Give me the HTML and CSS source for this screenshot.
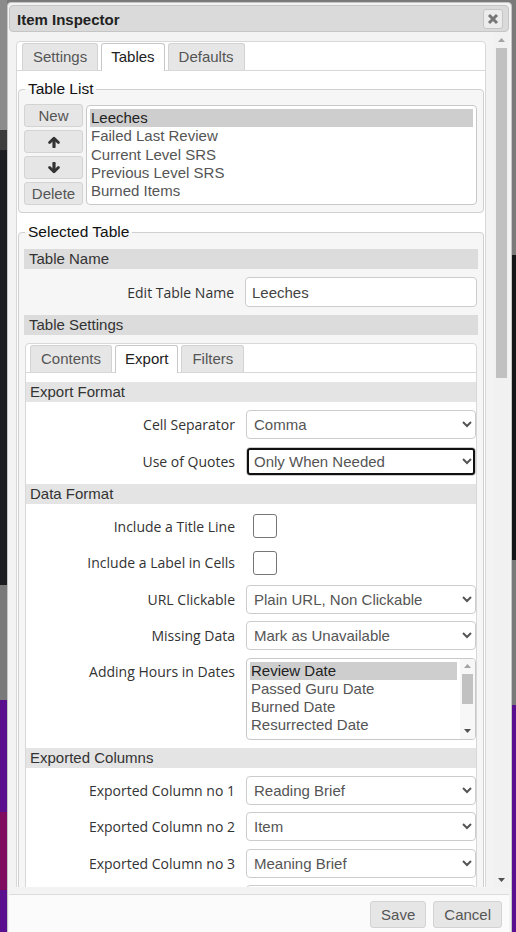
FILE: index.html
```html
<!DOCTYPE html>
<html lang="en">
<head>
<meta charset="utf-8">
<title>Item Inspector</title>
<link rel="stylesheet" href="styles.css">
</head>
<body>
<div class="dialog">
  <div class="titlebar">
    <span class="title">Item Inspector</span>
    <button class="close" title="Close"><svg width="12" height="12" viewBox="0 0 12 12"><path d="M2 2 L10 10 M10 2 L2 10" stroke="#777" stroke-width="3"/></svg></button>
  </div>
  <div class="content">
    <div class="scrollarea">
      <div class="tabs">
        <div class="tabnav">
          <span class="tab">Settings</span>
          <span class="tab active">Tables</span>
          <span class="tab">Defaults</span>
        </div>
        <div class="panel">
          <fieldset class="group">
            <legend>Table List</legend>
            <div class="tablelist">
              <div class="btncol">
                <button class="btn">New</button>
                <button class="btn"><svg width="12" height="12" viewBox="0 0 12 12"><path d="M1.6 6.6 L6 2.2 L10.4 6.6" fill="none" stroke="#333" stroke-width="2.8" stroke-linecap="round" stroke-linejoin="round"/><path d="M6 3 V10.8" stroke="#333" stroke-width="3.2" stroke-linecap="round"/></svg></button>
                <button class="btn"><svg width="12" height="12" viewBox="0 0 12 12"><path d="M1.6 5.4 L6 9.8 L10.4 5.4" fill="none" stroke="#333" stroke-width="2.8" stroke-linecap="round" stroke-linejoin="round"/><path d="M6 9 V1.2" stroke="#333" stroke-width="3.2" stroke-linecap="round"/></svg></button>
                <button class="btn">Delete</button>
              </div>
              <div class="listbox tables" role="listbox">
                <div class="items">
                  <div class="clip">
                    <div class="item sel">Leeches</div>
                    <div class="item">Failed Last Review</div>
                    <div class="item">Current Level SRS</div>
                    <div class="item">Previous Level SRS</div>
                    <div class="item">Burned Items</div>
                  </div>
                </div>
              </div>
            </div>
          </fieldset>
          <fieldset class="group selected">
            <legend>Selected Table</legend>
            <div class="stack">
              <div class="head">Table Name</div>
              <div class="row outer"><label>Edit Table Name</label><input class="text" type="text" value="Leeches"></div>
              <div class="head">Table Settings</div>
              <div class="tabs inner">
                <div class="tabnav">
                  <span class="tab">Contents</span>
                  <span class="tab active">Export</span>
                  <span class="tab">Filters</span>
                </div>
                <div class="form">
                  <div class="head light">Export Format</div>
                  <div class="row"><label>Cell Separator</label><select class="drop"><option>Comma</option><option>Semicolon</option><option>Tab</option></select></div>
                  <div class="row"><label>Use of Quotes</label><select class="drop focus"><option>Only When Needed</option><option>Always</option><option>Never</option></select></div>
                  <div class="head light">Data Format</div>
                  <div class="row"><label>Include a Title Line</label><input class="check" type="checkbox"></div>
                  <div class="row"><label>Include a Label in Cells</label><input class="check" type="checkbox"></div>
                  <div class="row"><label>URL Clickable</label><select class="drop"><option>Plain URL, Non Clickable</option><option>Clickable Link</option></select></div>
                  <div class="row"><label>Missing Data</label><select class="drop"><option>Mark as Unavailable</option><option>Leave Empty</option></select></div>
                  <div class="row top"><label>Adding Hours in Dates</label>
                    <div class="listbox dates" role="listbox">
                      <div class="items">
                        <div class="clip">
                          <div class="item sel">Review Date</div>
                          <div class="item">Passed Guru Date</div>
                          <div class="item">Burned Date</div>
                          <div class="item">Resurrected Date</div>
                        </div>
                      </div>
                      <div class="vscroll small">
                        <div class="sbtn"><svg width="7" height="4" viewBox="0 0 7 4"><path d="M0 4 L3.5 0 L7 4 Z" fill="#a3a3a3"/></svg></div>
                        <div class="track"><div class="thumb"></div></div>
                        <div class="sbtn"><svg width="7" height="4" viewBox="0 0 7 4"><path d="M0 0 L3.5 4 L7 0 Z" fill="#505050"/></svg></div>
                      </div>
                    </div>
                  </div>
                  <div class="head light">Exported Columns</div>
                  <div class="row"><label>Exported Column no 1</label><select class="drop"><option>Reading Brief</option></select></div>
                  <div class="row"><label>Exported Column no 2</label><select class="drop"><option>Item</option></select></div>
                  <div class="row"><label>Exported Column no 3</label><select class="drop"><option>Meaning Brief</option></select></div>
                  <div class="row"><label class="hidden-label">Exported Column no 4</label><select class="drop"><option>Type</option></select></div>
                </div>
              </div>
            </div>
          </fieldset>
        </div>
      </div>
    </div>
    <div class="vscroll main">
      <div class="sbtn"><svg width="7" height="4" viewBox="0 0 7 4"><path d="M0 4 L3.5 0 L7 4 Z" fill="#a3a3a3"/></svg></div>
      <div class="track"><div class="thumb"></div></div>
      <div class="sbtn"><svg width="7" height="4" viewBox="0 0 7 4"><path d="M0 0 L3.5 4 L7 0 Z" fill="#505050"/></svg></div>
    </div>
  </div>
  <div class="buttonpane">
    <button class="btn">Save</button>
    <button class="btn">Cancel</button>
  </div>
</div>
</body>
</html>
```

FILE: styles.css
```css
* { box-sizing: border-box; }

html, body {
  margin: 0;
  height: 932px;
  overflow: hidden;
}

body {
  padding: 2px 0 0 7px;
  font-family: "Liberation Sans", Arial, sans-serif;
  background:
    linear-gradient(to bottom, #8b8b8b 0 130px, #3c3c3c 130px 150px, #1c1d20 150px 585px, #7a7a7a 585px 700px, #5a0f8e 700px 812px, #800c60 812px 890px, #5a0f8e 890px) left top / 7px 100% no-repeat,
    linear-gradient(to bottom, #7a7a7a 0 255px, #151618 255px 560px, #7a7a7a 560px 705px, #5a0f8e 705px) right top / 5px 100% no-repeat,
    #7a7a7a;
}

.dialog {
  width: 505px;
  height: 945px;
  border: 1px solid #c5c5c5;
  border-radius: 4px;
  background: #f3f3f3;
  padding: 2px 2px 0 1px;
  display: flex;
  flex-direction: column;
}

.titlebar {
  flex: none;
  height: 27px;
  display: flex;
  align-items: center;
  justify-content: space-between;
  padding: 1px 5px 0 7px;
  background: #dadada;
  border: 1px solid #c5c5c5;
  border-radius: 4px;
}

.title {
  font-weight: bold;
  font-size: 15px;
  color: #222;
}

.close {
  width: 20px;
  height: 20px;
  padding: 0;
  border: 1px solid #c5c5c5;
  border-radius: 3px;
  background: #ececec;
  display: flex;
  align-items: center;
  justify-content: center;
}

.content {
  flex: none;
  height: 855px;
  display: flex;
  overflow: hidden;
}

.scrollarea {
  flex: 1;
  min-width: 0;
  overflow: hidden;
  padding: 9px 8px 0 7px;
}

/* drawn scrollbars */
.vscroll {
  flex: none;
  width: 15px;
  display: flex;
  flex-direction: column;
  background: #f1f1f1;
}

.sbtn {
  height: 15px;
  flex: none;
  display: flex;
  align-items: center;
  justify-content: center;
}

.track {
  flex: 1;
  padding: 0 2px;
}

.thumb {
  background: #c1c1c1;
  height: 100%;
}

.vscroll.main .thumb { height: 330px; margin-top: 1px; }
.vscroll.small .thumb { height: 30px; }
.vscroll.small { background: #f7f7f7; }

.tabs {
  background: #fff;
  border: 1px solid #d8d8d8;
  border-radius: 4px;
}

.tabnav {
  display: flex;
  align-items: flex-start;
  padding: 1px 4px 0 5px;
  border-bottom: 1px solid #d8d8d8;
}

.tab {
  height: 27px;
  line-height: 26px;
  padding: 0 10px;
  margin-right: 3px;
  border: 1px solid #d3d3d3;
  border-bottom: 0;
  border-radius: 3px 3px 0 0;
  background: #e6e6e6;
  color: #555;
  font-size: 15px;
}

.tab.active {
  height: 28px;
  margin-bottom: -1px;
  padding: 0 9px;
  background: #fff;
  border-color: #c8c8c8;
  color: #212121;
}

.inner .tabnav { padding-left: 4px; }

.panel {
  padding: 9px 1px 8px;
}

.group {
  margin: 0;
  min-width: 0;
  border: 1px solid #d0d0d0;
  border-radius: 4px;
  background: #f6f6f6;
  padding: 6px 5px 7px;
}

.group.selected {
  margin-top: 10px;
  padding-top: 8px;
}

.group legend {
  padding: 0 3px;
  margin-left: 1px;
  font-size: 15.5px;
  color: #111;
}

.tablelist {
  display: flex;
  align-items: flex-start;
  gap: 3px;
}

.btncol {
  display: flex;
  flex-direction: column;
  gap: 3px;
  width: 59px;
  flex: none;
}

.btn {
  height: 23px;
  padding: 0 10px;
  border: 1px solid #d3d3d3;
  border-radius: 3px;
  background: #e6e6e6;
  color: #555;
  font-family: "Liberation Sans", Arial, sans-serif;
  font-size: 15px;
  display: flex;
  align-items: center;
  justify-content: center;
}

.btncol .btn { padding: 0; width: 59px; }

.listbox {
  display: flex;
  border: 1px solid #c8c8c8;
  border-radius: 4px;
  background: #fff;
  overflow: hidden;
}

.items {
  flex: 1;
  min-width: 0;
  padding: 3px;
  color: #555;
  font-size: 15px;
}

.clip {
  height: 100%;
  overflow: hidden;
}

.item {
  height: 18.3px;
  line-height: 17.25px;
  padding: 0 1px;
  white-space: nowrap;
}

.item.sel {
  background: #cecece;
  color: #222;
}

.listbox.tables {
  flex: 1;
  min-width: 0;
  height: 100px;
  margin: 1px 1px 0 0;
}

.listbox.dates {
  width: 100%;
  height: 82px;
}

.stack {
  display: flex;
  flex-direction: column;
  gap: 8px;
}

.head {
  height: 20px;
  line-height: 20px;
  padding-left: 5px;
  background: #dcdcdc;
  color: #333;
  font-size: 15px;
}

.head.light {
  background: #e4e4e4;
  padding-left: 4px;
}

.row {
  display: grid;
  grid-template-columns: 209px 1fr;
  column-gap: 11px;
  align-items: center;
  min-height: 29px;
}

.row.outer {
  grid-template-columns: 210px 1fr;
  padding-right: 1px;
}

.row.top { align-items: start; }
.row.top label { padding-top: 4px; }

.row label {
  text-align: right;
  font-family: "Open Sans", "Noto Sans", sans-serif;
  font-size: 14px;
  color: #333;
}

.text {
  height: 30px;
  width: 100%;
  border: 1px solid #ccc;
  border-radius: 4px;
  padding: 0 6px;
  background: #fff;
  color: #444;
  font-family: "Liberation Sans", Arial, sans-serif;
  font-size: 15px;
}

.drop {
  height: 29px;
  width: 100%;
  border: 1px solid #ccc;
  border-radius: 4px;
  padding: 0 3px;
  background: #fff;
  color: #555;
  font-family: "Liberation Sans", Arial, sans-serif;
  font-size: 15px;
}

.drop.focus {
  outline: 2px solid #101010;
  outline-offset: -3px;
}

.check {
  appearance: none;
  -webkit-appearance: none;
  width: 24px;
  height: 24px;
  margin: 0 0 0 7px;
  border: 1px solid #767676;
  border-radius: 3px;
  background: #fff;
  justify-self: start;
}

.inner { margin: 0 1px; }

.form {
  display: flex;
  flex-direction: column;
  gap: 7.5px;
  padding: 9px 0 8px;
}

.form .head + .row,
.form .row + .head { margin-top: 0.5px; }

.buttonpane {
  flex: none;
  margin-top: 7px;
  border-top: 1px solid #dcdcdc;
  background: #fbfbfb;
  padding: 6px 7px 8px;
  display: flex;
  justify-content: flex-end;
  gap: 7px;
}

.buttonpane .btn { height: 27px; }
```
